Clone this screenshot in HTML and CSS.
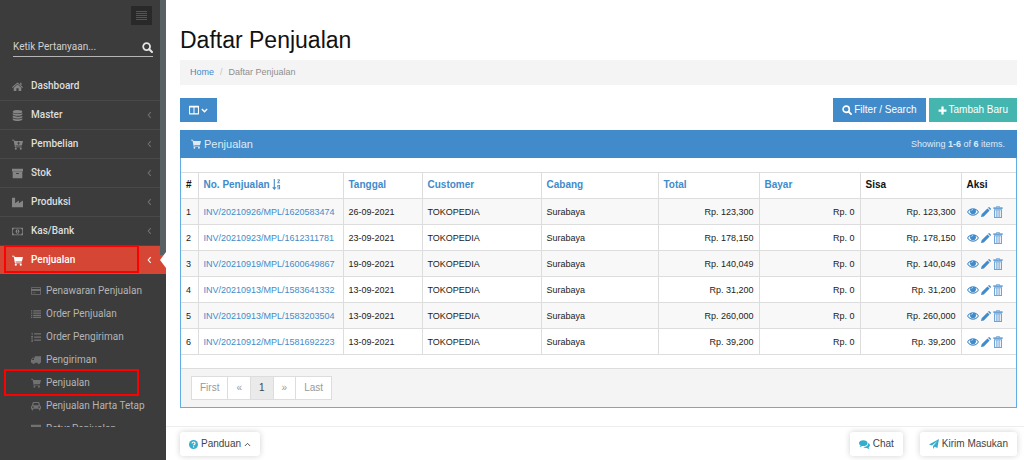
FILE: index.html
```html
<!DOCTYPE html>
<html lang="id">
<head>
<meta charset="utf-8">
<title>Daftar Penjualan</title>
<link rel="stylesheet" href="styles.css">
</head>
<body>
<svg class="sprite" aria-hidden="true">
  <symbol id="cart" viewBox="0 0 16 16"><path d="M0 1h3.300l.5 2H16l-1.600 6.500H5.200l.3 1.300H14V12H4.300L2.400 2.300H0z"/><circle cx="5.500" cy="14" r="1.500"/><circle cx="12.700" cy="14" r="1.500"/></symbol>
  <symbol id="cart-plus" viewBox="0 0 16 16"><path fill-rule="evenodd" d="M0 1h3.300l.5 2H16l-1.600 6.500H5.200l.3 1.300H14V12H4.300L2.400 2.300H0zM9 4v1.500H7.500v1.200H9v1.500h1.200V6.700h1.600V5.500h-1.600V4z"/><circle cx="5.500" cy="14" r="1.500"/><circle cx="12.700" cy="14" r="1.500"/></symbol>
  <symbol id="search" viewBox="0 0 16 16"><circle cx="6.700" cy="6.700" r="5" fill="none" stroke="currentColor" stroke-width="2.600"/><path d="M10.500 10.500l4 4" stroke="currentColor" stroke-width="3" stroke-linecap="round"/></symbol>
  <symbol id="home" viewBox="0 0 16 16"><path d="M8 2l8 7-1 1-7-6-7 6-1-1zM8 5.200l5.500 4.700V14.500H9.600v-4H6.400v4H2.500V9.900zM11.800 2.500h2v4l-2-1.800z"/></symbol>
  <symbol id="database" viewBox="0 0 16 16"><ellipse cx="8" cy="2.500" rx="7" ry="2.500"/><path d="M1 4.300c2 2 12 2 14 0v2.200c-1 2.600-13 2.600-14 0zM1 8.200c2 2 12 2 14 0v2.200c-1 2.600-13 2.600-14 0zM1 12.100c2 2 12 2 14 0v1.700c-1 2.900-13 2.900-14 0z"/></symbol>
  <symbol id="archive" viewBox="0 0 16 16"><path fill-rule="evenodd" d="M0 1h16v4H0zM1 5.500h14v9.500H1zM6 7.200v1.500h4V7.200z"/></symbol>
  <symbol id="factory" viewBox="0 0 16 16"><path d="M0 1h4.500v8L10 5v4l6-4v10H0z"/></symbol>
  <symbol id="money" viewBox="0 0 18 12"><path fill-rule="evenodd" d="M0 0h18v12H0zM3 1.200Q3 3 1.200 3v6Q3 9 3 10.800h12Q15 9 16.800 9V3Q15 3 15 1.200z"/><ellipse cx="9" cy="6" rx="3" ry="3.800"/><path d="M8 4l1-.8h.7v4.500h.8v.8H7.800v-.8h.8V4.500z" fill="#3c3c3c"/></symbol>
  <symbol id="card" viewBox="0 0 16 16"><path fill-rule="evenodd" d="M1 2h14q1 0 1 1v10q0 1-1 1H1q-1 0-1-1V3q0-1 1-1zM1.200 3.200v1.600h13.600V3.200zM1.200 8v4.800h13.600V8z"/><path d="M2.500 10.500h5v1h-5z"/></symbol>
  <symbol id="list" viewBox="0 0 16 16"><path d="M0 2h2v2H0zm3.500 0H16v2H3.500zM0 5.500h2v2H0zm3.500 0H16v2H3.500zM0 9h2v2H0zm3.500 0H16v2H3.500zM0 12.500h2v2H0zm3.500 0H16v2H3.500z"/></symbol>
  <symbol id="list-ol" viewBox="0 0 16 16"><path d="M5 2h11v2H5zm0 5h11v2H5zm0 5h11v2H5zM1 1h1.500v4H1.300V2.200H.5zM.3 6.500h2.800v1.700L1.700 9.500h1.400v1H.2V9.300l1.600-1.400H.3zM.3 12h2.800v3.500H.2v-1h1.600v-.4H1v-.8h.8V13H.3z"/></symbol>
  <symbol id="truck" viewBox="0 0 16 16"><path fill-rule="evenodd" d="M6 2h10v10.200H0V8l2.200-3.500H6zM2.800 5.700L1.500 8h3.300V5.700z"/><circle cx="4" cy="12.500" r="2"/><circle cx="12.500" cy="12.500" r="2"/></symbol>
  <symbol id="car" viewBox="0 0 16 16"><path fill-rule="evenodd" d="M4 1.500h8q1 0 1.300 1L14.500 7Q16 7.500 16 9v3.500h-1V14q0 1.200-1.200 1.200T12.500 14v-1.500h-9V14q0 1.200-1.200 1.200T1 14v-1.500H0V9q0-1.500 1.500-2l1.200-4.500q.3-1 1.300-1zM4.500 3.200L3.600 6.800h8.800l-.9-3.600zM3 8.500a1.300 1.300 0 100 2.600 1.300 1.300 0 000-2.600zM13 8.500a1.300 1.300 0 100 2.600 1.300 1.300 0 000-2.600z"/></symbol>
  <symbol id="left" viewBox="0 0 8 12"><path d="M6 1.500L2 6l4 4.500" fill="none" stroke="currentColor" stroke-width="1.800"/></symbol>
  <symbol id="down" viewBox="0 0 12 8"><path d="M1.500 1.500L6 6l4.500-4.500" fill="none" stroke="currentColor" stroke-width="2.400"/></symbol>
  <symbol id="up" viewBox="0 0 12 8"><path d="M1.500 6.500L6 2l4.500 4.500" fill="none" stroke="currentColor" stroke-width="1.600"/></symbol>
  <symbol id="columns" viewBox="0 0 16 16"><path fill-rule="evenodd" d="M1 1h14q1 0 1 1v12q0 1-1 1H1q-1 0-1-1V2q0-1 1-1zM1.700 3.800v9.500h5.500V3.800zM8.800 3.800v9.500h5.500V3.800z"/></symbol>
  <symbol id="plus" viewBox="0 0 16 16"><path d="M6 1h4v5h5v4h-5v5H6v-5H1V6h5z"/></symbol>
  <symbol id="sort" viewBox="0 0 16 20"><path d="M3 0h2v15h3l-4 5-4-5h3z"/><path d="M9.500 1h5v1.200l-3 4h3v1.300h-5V6.200l3-4h-3zM9.500 11h5v7.500h-5v-1.200h3.300V15.500H9.500zm1.500 1.200v2.100h1.900v-2.100z" fill-rule="evenodd"/></symbol>
  <symbol id="eye" viewBox="0 0 18 12"><path fill-rule="evenodd" d="M0 6Q3.500 .5 9 .5T18 6Q14.500 11.500 9 11.500T0 6zM1.600 6Q4.500 10.200 9 10.200T16.400 6Q15 4 13 3a4.500 4.500 0 11-8 0Q3 4 1.600 6z"/><path d="M7 4q0-1.700 1.800-1.900" fill="none" stroke="#fff"/></symbol>
  <symbol id="pencil" viewBox="0 0 16 16"><path d="M0 16l1-4.500L10.300 2.200l3.500 3.500L4.500 15zM11.200 1.300l1-1q.6-.6 1.300 0l2.200 2.200q.6.700 0 1.300l-1 1z"/></symbol>
  <symbol id="trash" viewBox="0 0 14 18"><path fill-rule="evenodd" d="M4.500 0h5v2H14v2.500H0V2h4.500zM5.500 1v1h3V1zM1 5h12v13H1zM2.500 6.500v10h1.300v-10zM5 6.500v10h1.300v-10zM7.700 6.500v10H9v-10zM10.200 6.500v10h1.300v-10z"/></symbol>
  <symbol id="help" viewBox="0 0 16 16"><circle cx="8" cy="8" r="8"/><path d="M5.300 6q.2-2.500 2.800-2.500T10.700 6Q10.700 7.200 9.300 8T8.100 9.700" fill="none" stroke="#fff" stroke-width="2"/><path d="M7 11h2.200v2.200H7z" fill="#fff"/></symbol>
  <symbol id="chat" viewBox="0 0 18 16"><path d="M7 1c4 0 7 2 7 4.800s-3 4.800-7 4.800q-1 0-1.800-.2Q3 12 1 12q1.200-1 1.400-2.700Q0 8 0 5.800C0 3 3 1 7 1z"/><path d="M15.200 5.500Q18 7 18 9.300q0 2-2.200 3.300.2 1.600 1.500 2.700-2.300 0-4.300-1.700-3.600.5-6-1.500 8-.2 8.200-6.600z"/></symbol>
  <symbol id="plane" viewBox="0 0 16 16"><path d="M16 0l-2.500 14.500-4.500-2L6.500 16v-4.800L13.500 3 4.600 10.500 0 8.800z"/></symbol>
</svg>

<div class="page">
  <aside class="sidebar">
    <div class="toggle-row"><button class="toggle" aria-label="Menu"><span></span><span></span><span></span><span></span><span></span></button></div>
    <form class="ask"><input class="ask-input" type="text" placeholder="Ketik Pertanyaan..." aria-label="Ketik Pertanyaan"><button class="ask-button" type="button" aria-label="Cari"><svg class="icon-md"><use href="#search"/></svg></button></form>
    <nav class="menu">
      <a class="item" href="#"><svg class="icon"><use href="#home"/></svg>Dashboard</a>
      <a class="item" href="#"><svg class="icon"><use href="#database"/></svg>Master<svg class="arrow"><use href="#left"/></svg></a>
      <a class="item" href="#"><svg class="icon"><use href="#cart-plus"/></svg>Pembelian<svg class="arrow"><use href="#left"/></svg></a>
      <a class="item" href="#"><svg class="icon"><use href="#archive"/></svg>Stok<svg class="arrow"><use href="#left"/></svg></a>
      <a class="item" href="#"><svg class="icon"><use href="#factory"/></svg>Produksi<svg class="arrow"><use href="#left"/></svg></a>
      <a class="item" href="#"><svg class="icon"><use href="#money"/></svg>Kas/Bank<svg class="arrow"><use href="#left"/></svg></a>
      <a class="item active marked" href="#"><svg class="icon"><use href="#cart"/></svg>Penjualan<svg class="arrow"><use href="#left"/></svg></a>
    </nav>
    <nav class="submenu-clip">
      <div class="submenu">
        <a class="subitem" href="#"><svg class="icon"><use href="#card"/></svg>Penawaran Penjualan</a>
        <a class="subitem" href="#"><svg class="icon"><use href="#list"/></svg>Order Penjualan</a>
        <a class="subitem" href="#"><svg class="icon"><use href="#list-ol"/></svg>Order Pengiriman</a>
        <a class="subitem" href="#"><svg class="icon"><use href="#truck"/></svg>Pengiriman</a>
        <a class="subitem marked" href="#"><svg class="icon"><use href="#cart"/></svg>Penjualan</a>
        <a class="subitem" href="#"><svg class="icon"><use href="#car"/></svg>Penjualan Harta Tetap</a>
        <a class="subitem" href="#"><svg class="icon"><use href="#archive"/></svg>Retur Penjualan</a>
      </div>
    </nav>
    <div class="scrollbar"></div>
  </aside>

  <main class="main">
    <div class="content">
      <h1 class="title">Daftar Penjualan</h1>
      <nav class="crumbs"><a href="#">Home</a><span class="slash">/</span><span>Daftar Penjualan</span></nav>
      <div class="toolbar">
        <button class="btn btn-columns" aria-label="Kolom"><svg class="icon"><use href="#columns"/></svg><svg class="chevron"><use href="#down"/></svg></button>
        <div class="actions">
          <button class="btn"><svg class="icon"><use href="#search"/></svg>Filter / Search</button>
          <button class="btn btn-green"><svg class="icon-sm"><use href="#plus"/></svg>Tambah Baru</button>
        </div>
      </div>
      <section class="panel">
        <header class="panel-head"><h2 class="panel-title"><svg class="icon"><use href="#cart"/></svg>Penjualan</h2><div class="summary">Showing <b>1-6</b> of <b>6</b> items.</div></header>
        <table class="grid">
          <colgroup><col class="c-no"><col class="c-inv"><col class="c-date"><col class="c-cust"><col class="c-branch"><col class="c-total"><col class="c-paid"><col class="c-rest"><col class="c-act"></colgroup>
          <thead><tr><th>#</th><th><a href="#">No. Penjualan <svg class="sort"><use href="#sort"/></svg></a></th><th><a href="#">Tanggal</a></th><th><a href="#">Customer</a></th><th><a href="#">Cabang</a></th><th><a href="#">Total</a></th><th><a href="#">Bayar</a></th><th>Sisa</th><th>Aksi</th></tr></thead>
          <tbody>
            <tr><td>1</td><td><a href="#">INV/20210926/MPL/1620583474</a></td><td>26-09-2021</td><td>TOKOPEDIA</td><td>Surabaya</td><td class="num">Rp. 123,300</td><td class="num">Rp. 0</td><td class="num">Rp. 123,300</td><td><div class="ops"><a href="#" aria-label="Lihat"><svg class="eye"><use href="#eye"/></svg></a><a href="#" aria-label="Ubah"><svg class="icon"><use href="#pencil"/></svg></a><a href="#" aria-label="Hapus"><svg class="trash"><use href="#trash"/></svg></a></div></td></tr>
            <tr><td>2</td><td><a href="#">INV/20210923/MPL/1612311781</a></td><td>23-09-2021</td><td>TOKOPEDIA</td><td>Surabaya</td><td class="num">Rp. 178,150</td><td class="num">Rp. 0</td><td class="num">Rp. 178,150</td><td><div class="ops"><a href="#" aria-label="Lihat"><svg class="eye"><use href="#eye"/></svg></a><a href="#" aria-label="Ubah"><svg class="icon"><use href="#pencil"/></svg></a><a href="#" aria-label="Hapus"><svg class="trash"><use href="#trash"/></svg></a></div></td></tr>
            <tr><td>3</td><td><a href="#">INV/20210919/MPL/1600649867</a></td><td>19-09-2021</td><td>TOKOPEDIA</td><td>Surabaya</td><td class="num">Rp. 140,049</td><td class="num">Rp. 0</td><td class="num">Rp. 140,049</td><td><div class="ops"><a href="#" aria-label="Lihat"><svg class="eye"><use href="#eye"/></svg></a><a href="#" aria-label="Ubah"><svg class="icon"><use href="#pencil"/></svg></a><a href="#" aria-label="Hapus"><svg class="trash"><use href="#trash"/></svg></a></div></td></tr>
            <tr><td>4</td><td><a href="#">INV/20210913/MPL/1583641332</a></td><td>13-09-2021</td><td>TOKOPEDIA</td><td>Surabaya</td><td class="num">Rp. 31,200</td><td class="num">Rp. 0</td><td class="num">Rp. 31,200</td><td><div class="ops"><a href="#" aria-label="Lihat"><svg class="eye"><use href="#eye"/></svg></a><a href="#" aria-label="Ubah"><svg class="icon"><use href="#pencil"/></svg></a><a href="#" aria-label="Hapus"><svg class="trash"><use href="#trash"/></svg></a></div></td></tr>
            <tr><td>5</td><td><a href="#">INV/20210913/MPL/1583203504</a></td><td>13-09-2021</td><td>TOKOPEDIA</td><td>Surabaya</td><td class="num">Rp. 260,000</td><td class="num">Rp. 0</td><td class="num">Rp. 260,000</td><td><div class="ops"><a href="#" aria-label="Lihat"><svg class="eye"><use href="#eye"/></svg></a><a href="#" aria-label="Ubah"><svg class="icon"><use href="#pencil"/></svg></a><a href="#" aria-label="Hapus"><svg class="trash"><use href="#trash"/></svg></a></div></td></tr>
            <tr><td>6</td><td><a href="#">INV/20210912/MPL/1581692223</a></td><td>13-09-2021</td><td>TOKOPEDIA</td><td>Surabaya</td><td class="num">Rp. 39,200</td><td class="num">Rp. 0</td><td class="num">Rp. 39,200</td><td><div class="ops"><a href="#" aria-label="Lihat"><svg class="eye"><use href="#eye"/></svg></a><a href="#" aria-label="Ubah"><svg class="icon"><use href="#pencil"/></svg></a><a href="#" aria-label="Hapus"><svg class="trash"><use href="#trash"/></svg></a></div></td></tr>
          </tbody>
        </table>
        <footer class="panel-foot"><nav class="pager"><a href="#">First</a><a href="#">«</a><a class="current" href="#">1</a><a href="#">»</a><a href="#">Last</a></nav></footer>
      </section>
    </div>
    <footer class="dock">
      <button class="dock-btn"><svg class="icon-sm"><use href="#help"/></svg>Panduan<svg class="chevron"><use href="#up"/></svg></button>
      <div class="dock-right">
        <button class="dock-btn"><svg class="icon-md"><use href="#chat"/></svg>Chat</button>
        <button class="dock-btn"><svg class="icon"><use href="#plane"/></svg>Kirim Masukan</button>
      </div>
    </footer>
  </main>
</div>
</body>
</html>
```
FILE: styles.css
```css
* { box-sizing: border-box; }
body { margin: 0; background: #fff; color: #222; font: 9px/12px "Liberation Sans", Arial, sans-serif; }
a { color: #428bca; text-decoration: none; }
button, input { font: inherit; border: 0; padding: 0; margin: 0; }
svg { fill: currentColor; flex: none; }
.sprite { display: none; }
.icon { width: 10px; height: 10px; }
.icon-sm { width: 9px; height: 9px; }
.icon-md { width: 11px; height: 11px; }
.chevron { width: 7px; height: 5px; }

.page { display: flex; min-height: 100vh; }

/* Sidebar */
.sidebar { position: relative; flex: none; width: 166px; background: #3c3c3c; color: #dedede; font: 10px/14px Roboto, sans-serif; }
.toggle-row { display: flex; justify-content: flex-end; padding: 6px 14px 0 0; }
.toggle { display: flex; flex-direction: column; justify-content: center; align-items: center; gap: 1px; width: 21px; height: 19px; background: #292929; }
.toggle span { width: 11px; height: 1px; background: #555; }
.ask { display: flex; align-items: center; margin: 13px 13px 15px; height: 19px; border-bottom: 1px solid #b5b5b5; }
.ask-input { flex: 1; min-width: 0; background: none; color: #dedede; outline: 0; }
.ask-input::placeholder { color: #d0d0d0; opacity: 1; }
.ask-button { display: flex; background: none; color: #e4e4e4; }
.item { position: relative; display: flex; align-items: center; gap: 8px; height: 29px; padding: 0 14px 0 12px; border-bottom: 1px solid #494949; color: #dedede; font-weight: 500; }
.item .icon { width: 11px; height: 11px; color: #858585; }
.arrow { width: 5px; height: 8px; margin-left: auto; color: #707070; }
.item.active { height: 28px; border: 0; background: #d64635; color: #fff; }
.item.active .icon, .item.active .arrow { color: #fff; }
.item.active::after { content: ""; position: absolute; z-index: 2; right: 0; top: 6px; border: 8px solid transparent; border-left: 0; border-right: 6px solid #fff; }
.submenu-clip { height: 153px; overflow: hidden; }
.submenu { padding-top: 5px; }
.subitem { position: relative; display: flex; align-items: center; gap: 5px; height: 23px; padding-left: 31px; color: #b4b4b4; }
.subitem .icon { color: #717171; }
.marked::before { content: ""; position: absolute; left: 4px; right: 27px; top: -1px; bottom: 1px; border: 2px solid #f00; }
.subitem.marked::before { top: -2px; bottom: -2px; }
.scrollbar { position: absolute; top: 0; right: 0; width: 6px; height: 255px; background: #586063; }

/* Content */
.main { flex: 1; min-width: 0; display: flex; flex-direction: column; justify-content: space-between; }
.content { padding: 26px 7px 0 14px; }
.title { margin: 0 0 6px; color: #111; font-size: 23px; font-weight: 400; line-height: 28px; }
.crumbs { display: flex; gap: 6px; padding: 6px 10px 7px; background: #f4f4f4; color: #8f8f8f; }
.slash { color: #c4c4c4; }
.toolbar { display: flex; justify-content: space-between; padding: 13px 0 8px; }
.actions { display: flex; gap: 3px; }
.btn { display: flex; align-items: center; gap: 2px; height: 24px; padding: 0 9px; background: #428bca; color: #fff; font-size: 10px; }
.btn-green { background: #45b6af; }
.panel { border: 1px solid #60aee4; border-top: 0; }
.panel-head { display: flex; align-items: center; justify-content: space-between; height: 28px; margin: 0 -1px; padding: 0 12px 0 11px; background: #428bca; color: #dfeaf5; }
.panel-title { display: flex; align-items: center; gap: 3px; margin: 0; font-size: 11px; font-weight: 400; }
.grid { width: 100%; margin: 14px 0 13px; table-layout: fixed; border-collapse: collapse; }
.grid th, .grid td { height: 26px; padding: 0 5px; border: 1px solid #ddd; text-align: left; white-space: nowrap; }
.grid th { padding-bottom: 2px; color: #111; font-size: 10px; }
.grid th:first-child, .grid td:first-child { border-left: 0; }
.grid th:last-child, .grid td:last-child { border-right: 0; }
.grid tbody tr:nth-child(odd) { background: #f8f8f8; }
.grid td.num { text-align: right; }
.c-no { width: 17px; }
.c-inv { width: 145px; }
.c-date { width: 79px; }
.c-cust { width: 119px; }
.c-branch { width: 117px; }
.c-total, .c-paid, .c-rest { width: 101px; }
.sort { width: 9px; height: 11px; vertical-align: middle; }
.ops { display: flex; align-items: center; gap: 2px; }
.ops a { display: flex; }
.eye { width: 12px; height: 8px; }
.trash { width: 10px; height: 12px; color: #6ea5d6; }
.panel-foot { padding: 7px 10px; background: #f4f4f4; border-top: 1px solid #ddd; }
.pager { display: inline-flex; vertical-align: top; border: 1px solid #ddd; background: #fff; font-size: 10px; }
.pager a { display: flex; align-items: center; height: 22px; padding: 0 8px; color: #999; }
.pager a + a { border-left: 1px solid #ddd; }
.pager .current { background: #eaeaea; color: #444; }

/* Bottom bar */
.dock { display: flex; justify-content: space-between; padding: 5px 7px 4px 14px; border-top: 1px solid #eee; }
.dock-right { display: flex; gap: 17px; }
.dock-btn { display: flex; align-items: center; gap: 3px; height: 24px; padding: 0 9px; border-radius: 3px; background: #fff; color: #444; font-size: 10px; box-shadow: 0 0 6px rgba(0, 0, 0, .18); }
.dock-btn .icon, .dock-btn .icon-sm, .dock-btn .icon-md { color: #36adca; }
```
